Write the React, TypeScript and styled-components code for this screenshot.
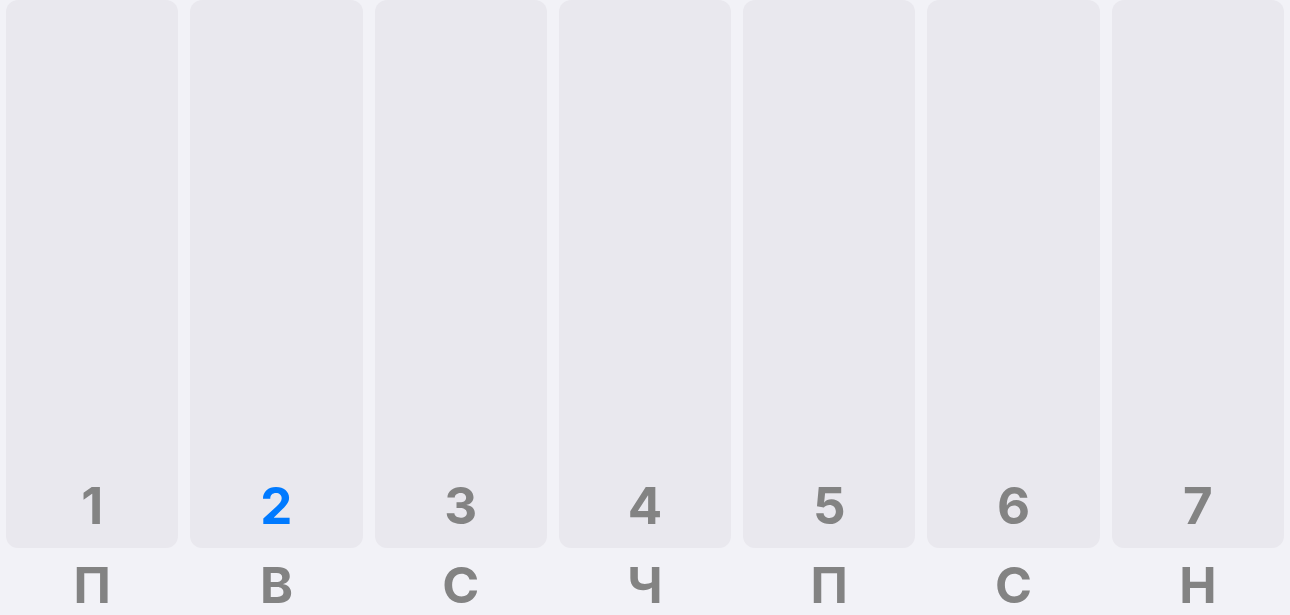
import React from "react";
import styled, { createGlobalStyle } from "styled-components";

const Global = createGlobalStyle`
  html, body { margin: 0; padding: 0; background: #f2f2f7; }
  body { font-family: Inter, "Noto Sans", sans-serif; }
`;

const Week = styled.div`
  display: grid;
  grid-template-columns: repeat(7, 1fr);
  column-gap: 12px;
  padding: 0 6px;
  height: 615px;
  box-sizing: border-box;
`;

const Day = styled.div`
  display: flex;
  flex-direction: column;
  align-items: stretch;
`;

const Card = styled.div`
  height: 548px;
  box-sizing: border-box;
  background: #e9e8ee;
  border-radius: 12px;
  display: flex;
  align-items: flex-end;
  justify-content: center;
  padding-bottom: 17px;
`;

const Num = styled.span<{ $active?: boolean }>`
  font-size: 51px;
  line-height: 1;
  font-weight: 700;
  color: ${(p) => (p.$active ? "#007aff" : "#838383")};
`;

const Letter = styled.div`
  padding-top: 12px;
  text-align: center;
  font-size: 50px;
  line-height: 1;
  font-weight: 700;
  color: #838383;
`;

const days = [
  { n: "1", l: "П" },
  { n: "2", l: "В", active: true },
  { n: "3", l: "С" },
  { n: "4", l: "Ч" },
  { n: "5", l: "П" },
  { n: "6", l: "С" },
  { n: "7", l: "Н" },
];

export default function App() {
  return (
    <>
      <Global />
      <Week>
        {days.map((d, i) => (
          <Day key={i}>
            <Card>
              <Num $active={d.active}>{d.n}</Num>
            </Card>
            <Letter>{d.l}</Letter>
          </Day>
        ))}
      </Week>
    </>
  );
}
